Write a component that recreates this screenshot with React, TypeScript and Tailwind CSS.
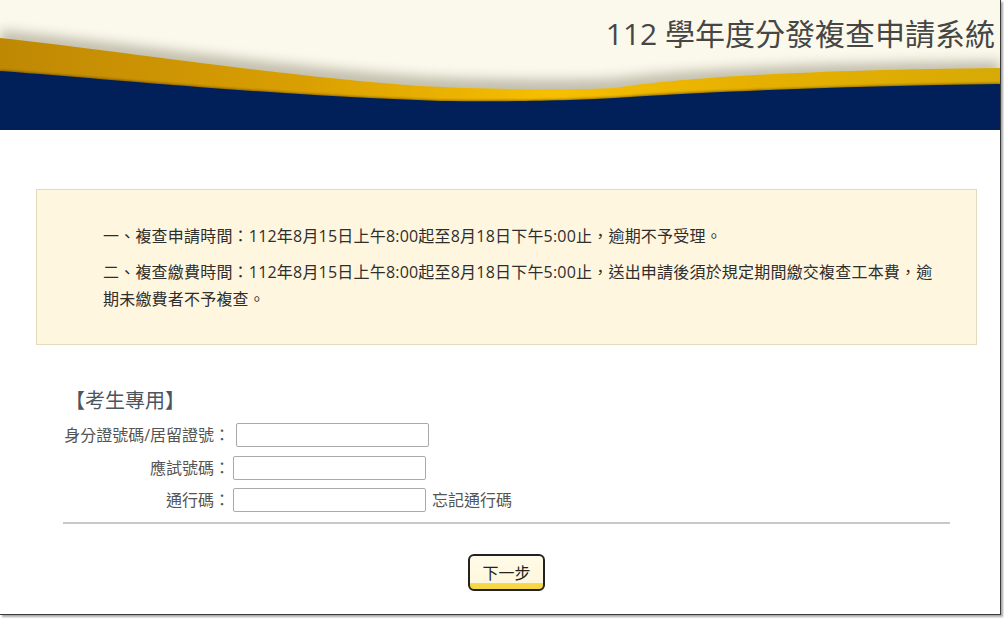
import React from "react";

const font = "font-['Open_Sans','Noto_Sans_CJK_TC',sans-serif]";

function HeaderWave() {
  return (
    <svg
      className="absolute inset-0"
      width="1000"
      height="130"
      viewBox="0 0 1000 130"
      preserveAspectRatio="none"
    >
      <defs>
        <linearGradient id="gold" x1="0" y1="0" x2="1" y2="0">
          <stop offset="0" stopColor="#bf8804" />
          <stop offset="0.3" stopColor="#d99f02" />
          <stop offset="0.55" stopColor="#f6bf00" />
          <stop offset="0.75" stopColor="#e6b000" />
          <stop offset="1" stopColor="#d8aa06" />
        </linearGradient>
        <filter id="soft" x="-10%" y="-50%" width="120%" height="200%">
          <feGaussianBlur stdDeviation="6" />
        </filter>
        <filter id="thin" x="-10%" y="-50%" width="120%" height="200%">
          <feGaussianBlur stdDeviation="1.2" />
        </filter>
      </defs>
      <rect width="1000" height="130" fill="#fbf9ec" />
      {/* shadow over the gold band */}
      <path
        d="M0,30 C120,42 280,66 420,76 C500,80 580,80 615,78 C680,70 800,62 1000,61 L1000,130 L0,130 Z"
        fill="#8c8672"
        opacity="0.5"
        filter="url(#soft)"
      />
      <path
        d="M0,38 C120,51 280,76 420,86 C500,90 580,90 615,88 C680,78 800,70 1000,68 L1000,130 L0,130 Z"
        fill="url(#gold)"
      />
      <path
        d="M0,70 C120,79 280,95 440,100 C520,101 580,99 615,97 C700,91 850,85 1000,83 L1000,130 L0,130 Z"
        fill="#3a2a00"
        opacity="0.5"
        filter="url(#thin)"
      />
      <path
        d="M0,71 C120,80 280,96 440,101 C520,102 580,100 615,98 C700,92 850,86 1000,84 L1000,130 L0,130 Z"
        fill="#011f58"
      />
    </svg>
  );
}

export default function App() {
  return (
    <div className={`w-[1004px] h-[619px] bg-white overflow-hidden ${font}`}>
      <div className="w-[1001px] h-[615px] border-r border-b border-[#3c3c3c] shadow-[2px_2px_2px_rgba(0,0,0,0.35)] bg-white overflow-hidden">
        {/* HEADER */}
        <div className="relative h-[130px] w-[1000px]">
          <HeaderWave />
          <div className="relative flex justify-end pt-[12px] pr-[5px]">
            <h1 className="text-[30px] leading-[44px] text-[#464646] font-normal">
              112 學年度分發複查申請系統
            </h1>
          </div>
        </div>

        {/* NOTICE */}
        <div className="mt-[59px] ml-[36px] w-[941px] border border-[#e4dabc] bg-[#fff6df] pt-[33px] pb-[31px] pl-[66px] pr-[35px] text-[16px] leading-[27px] tracking-[0.2px] text-[#2e2e2e]">
          <p>一、複查申請時間：112年8月15日上午8:00起至8月18日下午5:00止，逾期不予受理。</p>
          <p className="mt-[9px]">
            二、複查繳費時間：112年8月15日上午8:00起至8月18日下午5:00止，送出申請後須於規定期間繳交複查工本費，逾期未繳費者不予複查。
          </p>
        </div>

        {/* FORM */}
        <div className="ml-[63px] w-[887px] mt-[42px]">
          <h2 className="ml-[2px] text-[20px] leading-[28px] text-[#4c5660] font-normal">
            【考生專用】
          </h2>
          <div className="mt-[8px] flex flex-col gap-[8px] text-[16px] text-[#555]">
            <div className="flex items-center h-[24px]">
              <label className="w-[167px] text-right">身分證號碼/居留證號：</label>
              <input
                type="text"
                className="ml-[6px] w-[193px] h-[24px] border border-[#a9a9a9] rounded-[2px] bg-white"
              />
            </div>
            <div className="flex items-center h-[24px] mt-[1px]">
              <label className="w-[167px] text-right">應試號碼：</label>
              <input
                type="text"
                className="ml-[3px] w-[193px] h-[24px] border border-[#a9a9a9] rounded-[2px] bg-white"
              />
            </div>
            <div className="flex items-center h-[24px]">
              <label className="w-[167px] text-right">通行碼：</label>
              <input
                type="password"
                className="ml-[3px] w-[193px] h-[24px] border border-[#a9a9a9] rounded-[2px] bg-white"
              />
              <span className="ml-[6px]">忘記通行碼</span>
            </div>
          </div>
          <hr className="mt-[10px] border-0 h-[2px] bg-[#c8c8c8]" />
          <div className="flex justify-center mt-[30px]">
            <button className="w-[77px] h-[37px] rounded-[6px] border-2 border-[#222] bg-[linear-gradient(to_bottom,#fffbe8_0%,#fff7dc_82%,#f7d94a_82%,#f4d542_100%)] text-[16px] text-[#222] cursor-pointer">
              下一步
            </button>
          </div>
        </div>
      </div>
    </div>
  );
}
